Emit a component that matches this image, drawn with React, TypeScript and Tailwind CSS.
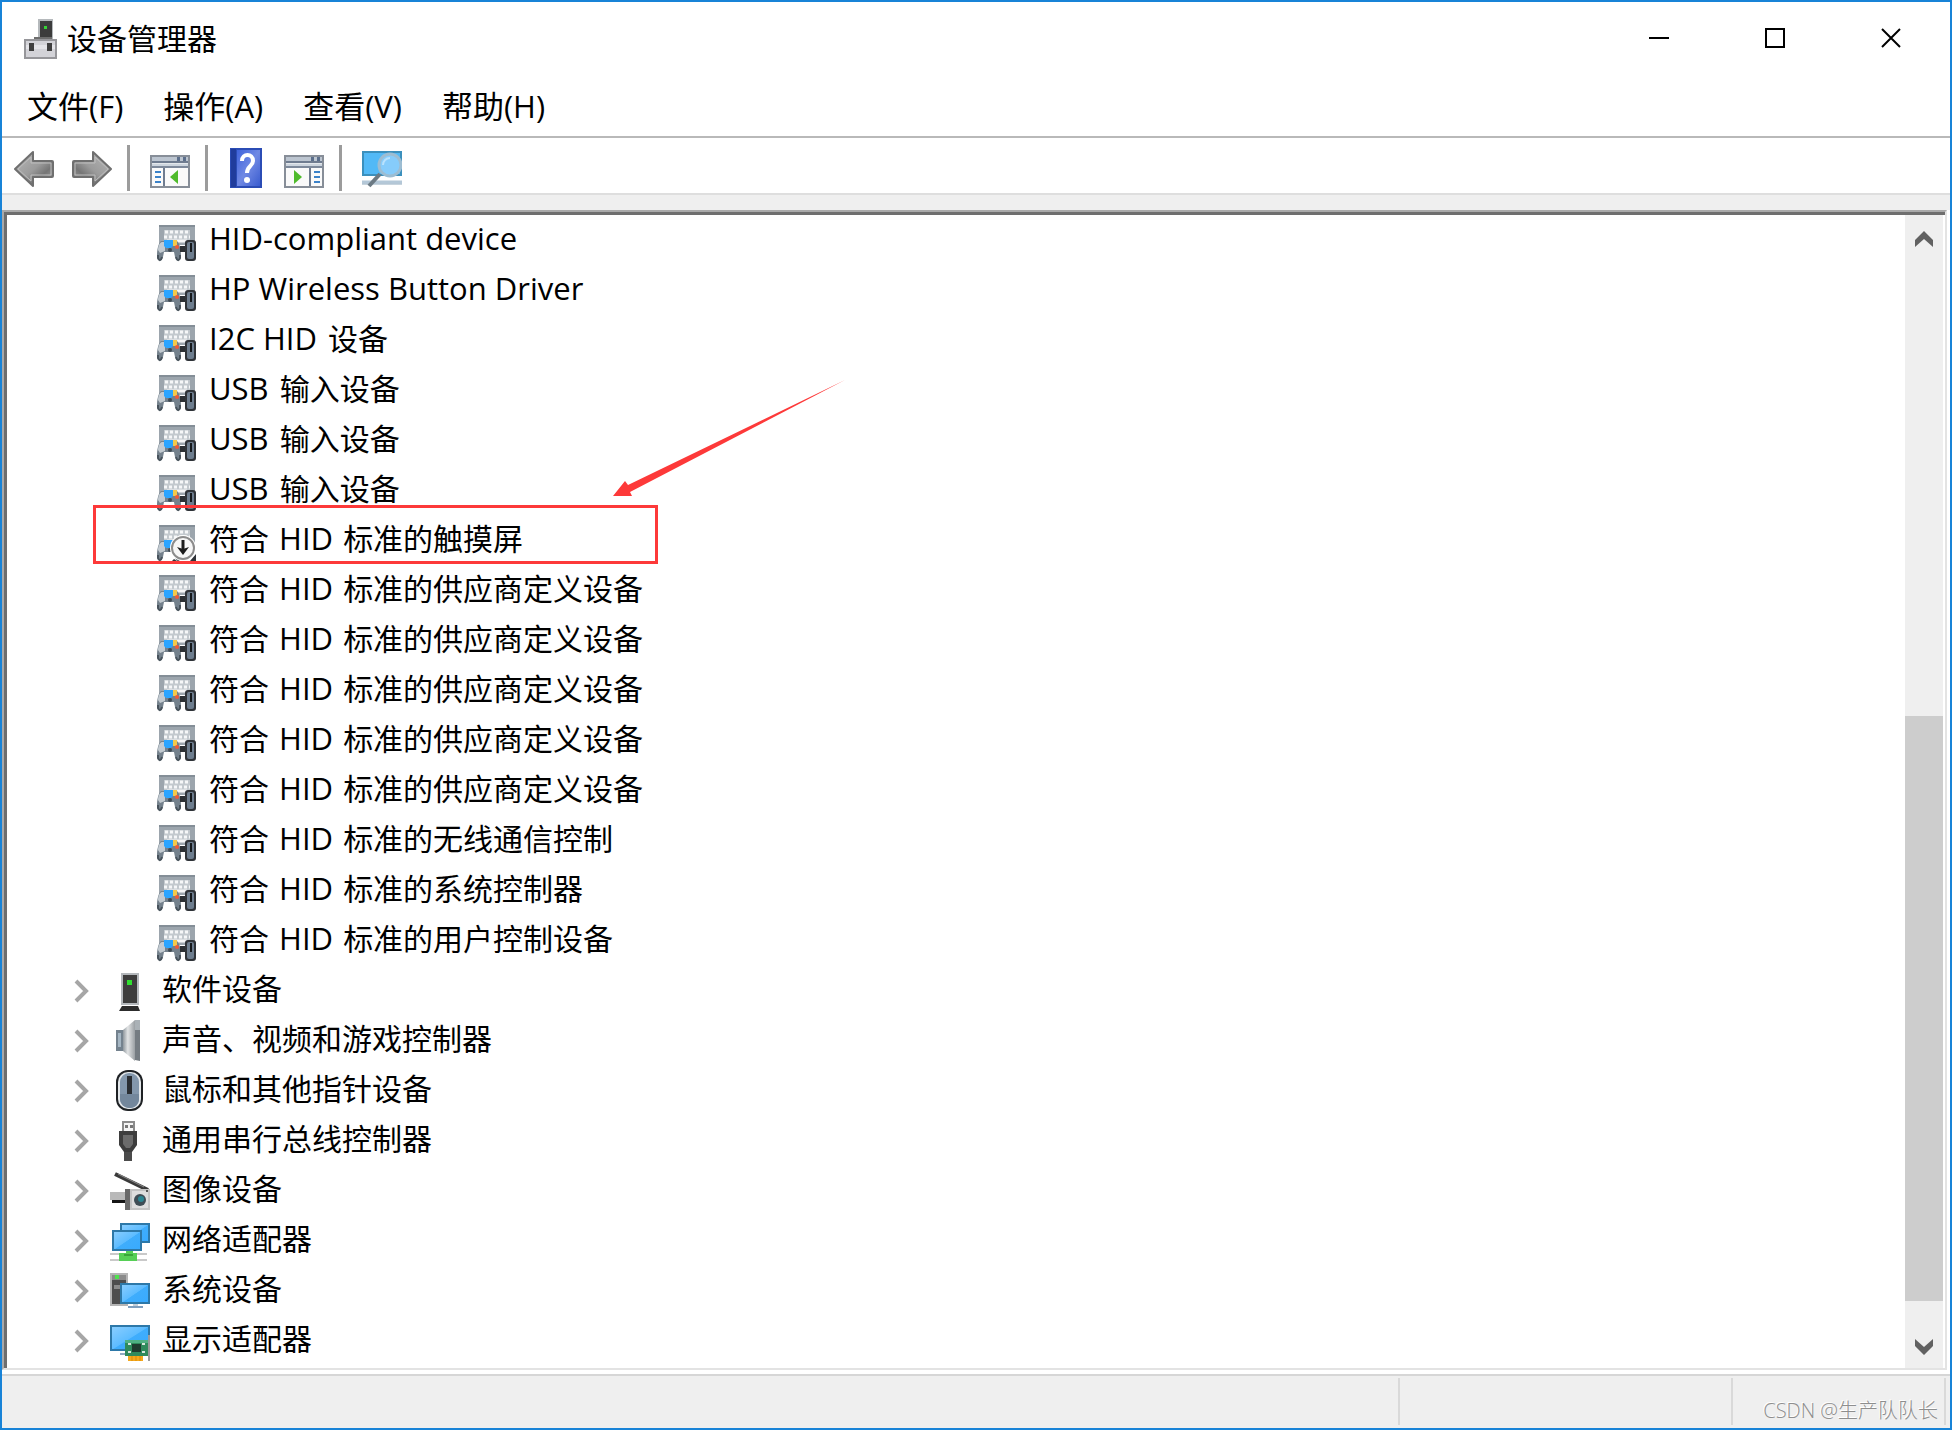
import type { ReactNode } from "react";

type Row = { name: string; disabled?: boolean };

const menus = ["文件(F)", "操作(A)", "查看(V)", "帮助(H)"];

const hidDevices: Row[] = [
  { name: "HID-compliant device" },
  { name: "HP Wireless Button Driver" },
  { name: "I2C HID 设备" },
  { name: "USB 输入设备" },
  { name: "USB 输入设备" },
  { name: "USB 输入设备" },
  { name: "符合 HID 标准的触摸屏", disabled: true },
  { name: "符合 HID 标准的供应商定义设备" },
  { name: "符合 HID 标准的供应商定义设备" },
  { name: "符合 HID 标准的供应商定义设备" },
  { name: "符合 HID 标准的供应商定义设备" },
  { name: "符合 HID 标准的供应商定义设备" },
  { name: "符合 HID 标准的无线通信控制" },
  { name: "符合 HID 标准的系统控制器" },
  { name: "符合 HID 标准的用户控制设备" },
];

const Icon = ({ children }: { children: ReactNode }) => (
  <svg
    className="mt-1 h-10 w-10 shrink-0 overflow-visible"
    viewBox="0 0 40 40"
    aria-hidden="true"
  >
    {children}
  </svg>
);

const HidIcon = ({ disabled }: { disabled?: boolean }) => (
  <Icon>
    <rect x="2" y="3" width="36" height="20" fill="#9ca5ad" />
    <rect x="2" y="3" width="36" height="2" fill="#848e97" />
    <path d="M7 8h26v12H7z" fill="#c3c9ce" />
    <path d="M8 10h24M7 15h26" stroke="#f6f7f8" strokeWidth="3" strokeDasharray="3 2" />
    <path d="M10 19h20" stroke="#f6f7f8" strokeWidth="3" />
    <path
      d="M0 34c0-6 1-12 4-15h16c3 3 4 9 4 15 0 6-5 6-6 1l-1-5H7l-1 5c-1 5-6 5-6-1z"
      fill="#74818c"
    />
    <path d="M1 28c0-4 2-8 4-8h3v9l-5 2z" fill="#c2cad0" />
    <path d="M1 33v3c1 3 3 3 4-1M23 33v3c-1 3-3 3-4-1" stroke="#48535c" strokeWidth="2" fill="none" />
    <path d="M7 18h9v6l-2 2H9l-2-2z" fill="#29a4ff" />
    <path d="M16 18h4v6h-4z" fill="#f4c94a" />
    <circle cx="20" cy="25" r="2" fill="#ef5a3a" />
    <circle cx="13" cy="28" r="2" fill="#3f4a52" />
    {!disabled && (
      <>
        <path d="M23 24h6v6h-6z" fill="#2b2f33" />
        <rect x="28" y="18" width="11" height="21" rx="3" fill="#2f3338" />
        <rect x="30" y="20" width="7" height="17" rx="2" fill="#6d7d8e" />
        <path d="M34 21v9" stroke="#15181b" strokeWidth="2" />
      </>
    )}
    {disabled && (
      <>
        <circle cx="26" cy="26" r="13" fill="#fff" />
        <path d="M39 32v7h-6zM17 37l3 2h-5z" fill="#2f3338" />
        <circle cx="26" cy="26" r="11" fill="#f7f7f7" stroke="#8c8c8c" strokeWidth="2" />
        <path d="M26 18v10" stroke="#1c1c1c" strokeWidth="3" />
        <path d="M20 25l6 8 6-8-6 2z" fill="#1c1c1c" />
      </>
    )}
  </Icon>
);

const SoftwareIcon = () => (
  <Icon>
    <rect x="11" y="1" width="18" height="32" fill="#b4b8bc" />
    <rect x="13" y="3" width="14" height="28" fill="#3d3d3d" />
    <rect x="17" y="8" width="5" height="5" fill="#2fe02f" />
    <path d="M12 34h16l2 5H9z" fill="#2c2c2c" />
  </Icon>
);

const SoundIcon = () => (
  <Icon>
    <defs>
      <linearGradient id="cone" x1="0" x2="1">
        <stop offset="0" stopColor="#8f979d" />
        <stop offset="0.4" stopColor="#e2e4e5" />
        <stop offset="1" stopColor="#9a9fa3" />
      </linearGradient>
    </defs>
    <rect x="6" y="8" width="8" height="21" fill="#74828e" />
    <rect x="8" y="11" width="3" height="14" fill="#a5b6c3" />
    <path d="M13 8L25-2v41L13 29z" fill="url(#cone)" />
    <path d="M25-2h5v41l-5-1z" fill="#757c82" />
    <path d="M25-2h5v10h-5z" fill="#aab1b6" />
  </Icon>
);

const MouseIcon = () => (
  <Icon>
    <rect x="6" y="-2" width="27" height="41" rx="12" fill="#1e2124" />
    <rect x="8" y="0" width="23" height="37" rx="10" fill="#e3e7ea" />
    <rect x="10" y="1" width="19" height="35" rx="9" fill="#8397ac" />
    <path d="M10 22h19v5c0 5-4 9-9 9s-10-4-10-9z" fill="#73879c" />
    <rect x="17" y="4" width="5" height="18" fill="#2a2e33" />
  </Icon>
);

const UsbIcon = () => (
  <Icon>
    <path d="M13 10V0h11v10" fill="#f4f4f4" stroke="#8b8b8b" strokeWidth="2" />
    <path d="M15 3h3v3h-3zM20 3h3v3h-3z" fill="#777" />
    <path d="M9 9h18v14l-5 7h-8l-5-7z" fill="#3d3d3d" />
    <path d="M13 13h10v9l-3 4h-4l-3-4z" fill="#6b6b6b" />
    <path d="M14 30h8v9h-8z" fill="#4b4b4b" />
  </Icon>
);

const CameraIcon = () => (
  <Icon>
    <path d="M5 2l33 16" stroke="#3a3a3a" strokeWidth="4" />
    <path d="M8 2l26 13" stroke="#8a8a8a" strokeWidth="1" />
    <rect x="0" y="20" width="15" height="8" fill="#b9b9b9" />
    <rect x="2" y="28" width="13" height="3" fill="#151515" />
    <rect x="15" y="17" width="7" height="21" fill="#696969" />
    <rect x="20" y="17" width="20" height="21" fill="#c4c4c4" />
    <rect x="22" y="19" width="16" height="17" fill="#dedede" />
    <circle cx="30" cy="28" r="6" fill="#3f4d55" />
    <circle cx="31" cy="27" r="3" fill="#2b8591" />
    <rect x="36" y="18" width="2" height="2" fill="#555" />
  </Icon>
);

const Screen = ({ x, y, w, h }: { x: number; y: number; w: number; h: number }) => (
  <>
    <defs>
      <linearGradient id="screen" x1="0" y1="0" x2="1" y2="1">
        <stop offset="0" stopColor="#8ccfff" />
        <stop offset="0.5" stopColor="#5dbcff" />
        <stop offset="0.52" stopColor="#3fadfc" />
        <stop offset="1" stopColor="#38aaff" />
      </linearGradient>
    </defs>
    <rect x={x} y={y} width={w} height={h} fill="url(#screen)" stroke="#2d78a8" strokeWidth="2" />
  </>
);

const NetworkIcon = () => (
  <Icon>
    <Screen x={11} y={2} w={28} h={18} />
    <Screen x={3} y={9} w={28} h={19} />
    <path d="M0 32h37M0 38h37" stroke="#c9c9c9" strokeWidth="2" />
    <path d="M16 29h7v2h4v8H9v-8h7z" fill="#56cf56" />
    <path d="M14 33h9" stroke="#3aa53a" strokeWidth="2" />
  </Icon>
);

const SystemIcon = () => (
  <Icon>
    <rect x="0" y="1" width="18" height="33" fill="#b5b5b5" />
    <rect x="2" y="3" width="14" height="29" fill="#4e4e4e" />
    <path d="M2 3h14v5H2zM4 13h12v4H4z" fill="#8b8b8b" />
    <rect x="5" y="3" width="4" height="4" fill="#4fe24f" />
    <Screen x={11} y={12} w={28} h={19} />
    <path d="M23 32h5v2h-5z" fill="#c3ced8" />
    <path d="M18 35h15" stroke="#7f9fbe" strokeWidth="2" />
  </Icon>
);

const DisplayIcon = () => (
  <Icon>
    <Screen x={1} y={4} w={38} h={24} />
    <path d="M10 32h8" stroke="#8fa9c2" strokeWidth="2" />
    <rect x="15" y="18" width="23" height="16" fill="#2f8a5c" />
    <rect x="15" y="18" width="23" height="3" fill="#4fb083" />
    <rect x="22" y="22" width="9" height="8" fill="#1f3b2f" />
    <path d="M18 22h3M18 30h3M32 22h3M32 30h3" stroke="#d7e7de" strokeWidth="2" />
    <path d="M18 34h15v5H18z" fill="#f5a81c" />
    <path d="M22 34v5M26 34v5M30 34v5" stroke="#d98b08" strokeWidth="1" />
    <path d="M39 13v26" stroke="#9b9b9b" strokeWidth="2" />
  </Icon>
);

const categories = [
  { name: "软件设备", icon: <SoftwareIcon /> },
  { name: "声音、视频和游戏控制器", icon: <SoundIcon /> },
  { name: "鼠标和其他指针设备", icon: <MouseIcon /> },
  { name: "通用串行总线控制器", icon: <UsbIcon /> },
  { name: "图像设备", icon: <CameraIcon /> },
  { name: "网络适配器", icon: <NetworkIcon /> },
  { name: "系统设备", icon: <SystemIcon /> },
  { name: "显示适配器", icon: <DisplayIcon /> },
];

// Latin words are set a touch larger than the Chinese around them
const Label = ({ text }: { text: string }) => (
  <span className="whitespace-pre pb-[3px] leading-[46px]">
    {text.split(/( ?[A-Z][\w -]+)/).map((part, key) =>
      /[A-Z]/.test(part) ? (
        <span className={part.startsWith(" ") ? "mx-[2px] text-[31px]" : "mr-[3px] text-[31px]"} key={key}>
          {part}
        </span>
      ) : (
        part
      )
    )}
  </span>
);

const TitleBar = () => (
  <header className="flex h-[74px] items-center justify-between pl-[22px]">
    <div className="flex items-center gap-[10px]">
      <svg className="h-10 w-[33px]" viewBox="0 0 33 40" aria-hidden="true">
        <rect x="14" y="0" width="15" height="21" fill="#b5b9bc" />
        <rect x="16" y="2" width="12" height="19" fill="#3c3c3c" />
        <rect x="20" y="7" width="3" height="3" fill="#35d435" />
        <path d="M10 18h18v3H10z" fill="#6d6d6d" />
        <path d="M0 20h33v20H0z" fill="#96969a" />
        <path d="M2 22h29v16H2z" fill="#d3d3d8" />
        <path d="M2 26h29v4H2z" fill="#e4e4e8" />
        <path d="M5 24h5v8H5zM23 24h5v8h-5z" fill="#3f3f3f" />
      </svg>
      <h1 className="text-[30px] leading-10">设备管理器</h1>
    </div>
    <div className="flex h-full pr-px pb-[2px]">
      <button className="flex w-[116px] items-center justify-center" aria-label="最小化">
        <svg className="h-5 w-5" viewBox="0 0 20 20">
          <path d="M0 10h20" stroke="#000" strokeWidth="2" />
        </svg>
      </button>
      <button className="flex w-[116px] items-center justify-center" aria-label="最大化">
        <svg className="h-5 w-5" viewBox="0 0 20 20">
          <rect x="1" y="1" width="18" height="18" fill="none" stroke="#000" strokeWidth="2" />
        </svg>
      </button>
      <button className="flex w-[116px] items-center justify-center" aria-label="关闭">
        <svg className="h-5 w-5" viewBox="0 0 20 20">
          <path d="M1 1l18 18M19 1L1 19" stroke="#000" strokeWidth="2" />
        </svg>
      </button>
    </div>
  </header>
);

const ToolIcon = ({ children }: { children: ReactNode }) => (
  <svg className="h-[46px] w-10" viewBox="0 0 40 46">
    {children}
  </svg>
);

const Arrow = () => (
  <>
    <defs>
      <linearGradient id="arrow" x1="0" y1="0" x2="1" y2="1">
        <stop offset="0" stopColor="#b9b9b9" />
        <stop offset="0.5" stopColor="#9b9b9b" />
        <stop offset="0.7" stopColor="#757575" />
        <stop offset="1" stopColor="#a8a8a8" />
      </linearGradient>
    </defs>
    <path
      d="M1 24L19 7v9h19q1 0 1 1v14q0 1-1 1H19v9z"
      fill="url(#arrow)"
      stroke="#6f6f6f"
      strokeWidth="2"
      strokeLinejoin="round"
    />
    <path d="M4 24L17 12v6h20v12H17v6z" fill="none" stroke="#bdbdbd" strokeWidth="1" />
  </>
);

const Panel = () => (
  <>
    <rect x="1" y="11" width="38" height="31" fill="#fafafa" stroke="#878e98" strokeWidth="2" />
    <path d="M2 12h36v4H2z" fill="#bcc5d0" />
    <path d="M27 12h3v4h-3zM33 12h3v4h-3z" fill="#5c6f8c" />
    <path d="M2 17h36" stroke="#6f7c90" strokeWidth="2" />
    <path d="M2 20h36" stroke="#cdd5de" strokeWidth="3" />
    <path d="M2 22h36" stroke="#7d899b" strokeWidth="2" />
  </>
);

const Separator = () => <div className="ml-[15px] mr-5 w-[3px] bg-[#9c9c9c]" />;

const Toolbar = () => (
  <div className="flex border-b-2 border-[#dedede] pt-[7px] pb-[2px] pl-3">
    <button aria-label="后退">
      <ToolIcon>
        <Arrow />
      </ToolIcon>
    </button>
    <button className="ml-[18px]" aria-label="前进">
      <ToolIcon>
        <g transform="translate(40 0) scale(-1 1)">
          <Arrow />
        </g>
      </ToolIcon>
    </button>
    <Separator />
    <button aria-label="显示/隐藏控制台树">
      <ToolIcon>
        <Panel />
        <path d="M14 23v18" stroke="#6f7c90" strokeWidth="2" />
        <path d="M5 27h6M5 32h6M5 37h6" stroke="#3b82c9" strokeWidth="2" />
        <path d="M20 32l8-7v14z" fill="#4fbb2c" />
      </ToolIcon>
    </button>
    <Separator />
    <button aria-label="帮助">
      <svg className="h-[46px] w-9" viewBox="0 0 36 46">
        <defs>
          <linearGradient id="book" x1="0" y1="0" x2="1" y2="1">
            <stop offset="0" stopColor="#3f63dc" />
            <stop offset="0.5" stopColor="#7089e4" />
            <stop offset="1" stopColor="#3a5ccf" />
          </linearGradient>
        </defs>
        <rect x="2" y="3" width="32" height="40" fill="#2b4cb5" />
        <rect x="9" y="5" width="23" height="36" fill="url(#book)" />
        <path d="M3 4h5v38H3z" fill="#203c9c" />
        <path
          d="M14 16c0-8 11-8 11 0 0 5-6 5-6 12"
          fill="none"
          stroke="#fff"
          strokeWidth="4"
        />
        <circle cx="19" cy="35" r="3" fill="#fff" />
      </svg>
    </button>
    <button className="ml-5" aria-label="显示/隐藏操作窗格">
      <ToolIcon>
        <Panel />
        <path d="M26 23v18" stroke="#6f7c90" strokeWidth="2" />
        <path d="M30 27h6M30 32h6M30 37h6" stroke="#3b82c9" strokeWidth="2" />
        <path d="M18 32l-8-7v14z" fill="#4fbb2c" />
      </ToolIcon>
    </button>
    <Separator />
    <button aria-label="扫描检测硬件改动">
      <ToolIcon>
        <rect x="1" y="7" width="38" height="23" fill="#52b9f6" stroke="#3b90bd" strokeWidth="2" />
        <path d="M0 37h40" stroke="#b4c8d8" strokeWidth="3" />
        <path d="M0 39h40" stroke="#8fa9be" strokeWidth="1" />
        <path d="M18 29L7 41" stroke="#6c7a84" strokeWidth="4" />
        <circle cx="28" cy="20" r="11" fill="#86ccfb" stroke="#9dbdd2" strokeWidth="3" />
        <path d="M21 20a7 7 0 017-7" fill="none" stroke="#b9e2fd" strokeWidth="2" />
      </ToolIcon>
    </button>
  </div>
);

const Marker = () => (
  <>
    <div className="pointer-events-none absolute -top-[10px] left-[86px] h-[59px] w-[565px] border-[3px] border-[#fd3939]" />
    <svg
      className="pointer-events-none absolute -top-[135px] left-[606px] h-[116px] w-[232px]"
      viewBox="0 0 232 116"
      aria-hidden="true"
    >
      <path d="M0 116L12 101l3 4L232 0 17 112l2 4z" fill="#fd3939" />
    </svg>
  </>
);

const ScrollBar = () => (
  <div className="mr-[2px] flex w-[38px] flex-col bg-[#efefef]">
    <button className="flex h-[47px] items-center justify-center" aria-label="向上滚动">
      <svg className="h-4 w-5" viewBox="0 0 20 16">
        <path d="M1 9l9-9 9 9v7l-9-8-9 8z" fill="#616161" />
      </svg>
    </button>
    <div className="grow-[454]" />
    <div className="grow-[585] bg-[#cdcdcd]" />
    <div className="grow-[24]" />
    <button className="flex h-[43px] items-center justify-center" aria-label="向下滚动">
      <svg className="h-4 w-5" viewBox="0 0 20 16">
        <path d="M1 7l9 9 9-9V0l-9 8-9-8z" fill="#616161" />
      </svg>
    </button>
  </div>
);

const DeviceTree = () => (
  <main className="mr-[3px] flex grow border-t-2 border-r-2 border-b-2 border-l-2 border-t-[#a9a9a9] border-r-[#e3e3e3] border-b-[#e3e3e3] border-l-[#a9a9a9] bg-white">
    <div className="flex grow border-t-[3px] border-l-[3px] border-[#6e6e6e]">
      <ul className="grow pb-[3px]">
        {hidDevices.map((device, key) => (
          <li className="relative flex h-[50px] items-center gap-3 pl-[150px]" key={key}>
            <HidIcon disabled={device.disabled} />
            <Label text={device.name} />
            {device.disabled && <Marker />}
          </li>
        ))}
        {categories.map((category) => (
          <li className="flex h-[50px] items-center pl-[67px]" key={category.name}>
            <button className="mt-[2px]" aria-label={`展开 ${category.name}`}>
              <svg className="h-6 w-4" viewBox="0 0 16 24">
                <path d="M2 2l10 10L2 22" fill="none" stroke="#a6a6a6" strokeWidth="4" />
              </svg>
            </button>
            <div className="ml-5 flex items-center gap-3">
              {category.icon}
              <Label text={category.name} />
            </div>
          </li>
        ))}
      </ul>
      <ScrollBar />
    </div>
  </main>
);

const StatusBar = () => (
  <footer className="mt-1 flex h-[54px] justify-end border-t-2 border-[#d6d6d6] bg-[#efefef] pt-[2px] pr-1 pb-[3px]">
    <div className="w-[333px] border-l-2 border-[#d9d9d9]" />
    <div className="flex w-[215px] items-end justify-end border-x-2 border-[#d9d9d9] pr-[6px]">
      <span className="whitespace-nowrap text-xl font-light leading-7 text-[#8e8e8e] [text-shadow:-1px_-1px_0_#fff]">
        CSDN @生产队队长
      </span>
    </div>
  </footer>
);

const App = () => {
  return (
    <div className="flex min-h-screen flex-col border-2 border-[#1883d7] bg-white font-['Open_Sans','Noto_Sans_CJK_SC',sans-serif] text-[30px] text-black">
      <TitleBar />
      <nav className="flex h-[62px] items-center gap-10 border-b-2 border-[#b9b9b9] pl-[25px] text-[31px]">
        {menus.map((menu) => (
          <button className="leading-10" key={menu}>
            {menu}
          </button>
        ))}
      </nav>
      <Toolbar />
      <div className="flex grow flex-col">
        <div className="h-[15px] bg-[#efefef]" />
        <DeviceTree />
      </div>
      <StatusBar />
    </div>
  );
};

export default App;
